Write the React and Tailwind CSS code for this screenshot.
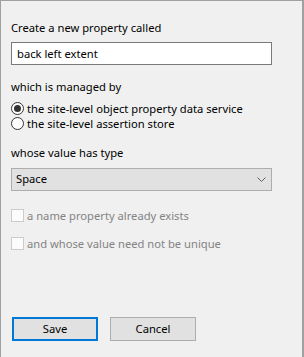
import React, { useState } from 'react';

const font = { fontFamily: '"Noto Sans", "Open Sans", sans-serif' };

function Radio({ checked, label, onClick }) {
  return (
    <div className="flex items-center h-[15px] cursor-default" onClick={onClick}>
      <span className="w-[13px] h-[13px] rounded-full border border-[#333333] bg-white flex items-center justify-center shrink-0">
        {checked && <span className="w-[7px] h-[7px] rounded-full bg-[#333333]" />}
      </span>
      <span className="ml-[3px] text-[11.2px] leading-[14px] text-black">{label}</span>
    </div>
  );
}

function DisabledCheck({ label }) {
  return (
    <div className="flex items-center h-[13px]">
      <span className="w-[13px] h-[13px] border border-[#cccccc] bg-[#fcfcfc] shrink-0" />
      <span className="ml-[3px] text-[11.2px] leading-[14px] text-[#838383]">{label}</span>
    </div>
  );
}

export default function App() {
  const [name, setName] = useState('back left extent');
  const [store, setStore] = useState(0);

  return (
    <div
      className="w-[304px] h-[357px] bg-[#f0f0f0] border-t border-l border-r-2 border-[#a0a0a0] pl-[10px] flex flex-col"
      style={font}
    >
      <div className="mt-[19px] text-[11.2px] leading-[16px] text-black">Create a new property called</div>
      <input
        className="mt-[6px] w-[261px] h-[23px] border border-[#7a7a7a] bg-white px-[5px] text-[11.2px] text-black outline-none"
        style={font}
        value={name}
        onChange={(e) => setName(e.target.value)}
      />

      <div className="mt-[14px] text-[11.2px] leading-[16px] text-black">which is managed by</div>
      <div className="mt-[6px] flex flex-col">
        <Radio checked={store === 0} label="the site-level object property data service" onClick={() => setStore(0)} />
        <Radio checked={store === 1} label="the site-level assertion store" onClick={() => setStore(1)} />
      </div>

      <div className="mt-[14px] text-[11.2px] leading-[16px] text-black">whose value has type</div>
      <div className="mt-[7px] w-[261px] h-[23px] border border-[#adadad] bg-[#e1e1e1] flex items-center justify-between pl-[4px] pr-[5px]">
        <span className="text-[11.2px] text-black">Space</span>
        <svg width="9" height="5" viewBox="0 0 9 5" fill="none">
          <path d="M0.5 0.5 L4.5 4.5 L8.5 0.5" stroke="#606060" strokeWidth="1" />
        </svg>
      </div>

      <div className="mt-[18px]">
        <DisabledCheck label="a name property already exists" />
      </div>
      <div className="mt-[15px]">
        <DisabledCheck label="and whose value need not be unique" />
      </div>

      <div className="mt-auto mb-[16px] flex gap-[12px] pl-[1px]">
        <button className="w-[86px] h-[24px] border-2 border-[#0078d7] bg-[#e1e1e1] text-[11.2px] text-black" style={font}>
          Save
        </button>
        <button className="w-[86px] h-[24px] border border-[#adadad] bg-[#e1e1e1] text-[11.2px] text-black" style={font}>
          Cancel
        </button>
      </div>
    </div>
  );
}
